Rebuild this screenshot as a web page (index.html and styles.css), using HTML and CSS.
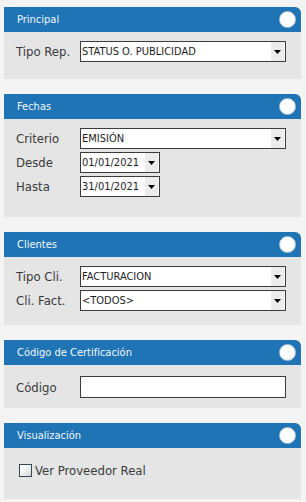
FILE: index.html
```html
<!DOCTYPE html>
<html lang="es">
<head>
    <meta charset="UTF-8">
    <meta name="viewport" content="width=device-width, initial-scale=1.0">
    <title>Filtros del Reporte</title>
    <link rel="stylesheet" href="styles.css">
</head>
<body>

<!-- Principal -->
<div class="panel panel-principal">
    <div class="panel-header">
        <span class="panel-title">Principal</span>
        <span class="panel-toggle"></span>
    </div>
    <div class="panel-body">
        <div class="row">
            <label class="label">Tipo Rep.</label>
            <div class="select">
                <span class="select-value">STATUS O. PUBLICIDAD</span>
                <span class="select-arrow"><svg width="7" height="4" viewBox="0 0 7 4"><polygon points="0,0 7,0 3.5,4" fill="#000"/></svg></span>
            </div>
        </div>
    </div>
</div>

<!-- Fechas -->
<div class="panel panel-fechas">
    <div class="panel-header">
        <span class="panel-title">Fechas</span>
        <span class="panel-toggle"></span>
    </div>
    <div class="panel-body">
        <div class="row">
            <label class="label">Criterio</label>
            <div class="select">
                <span class="select-value">EMISIÓN</span>
                <span class="select-arrow"><svg width="7" height="4" viewBox="0 0 7 4"><polygon points="0,0 7,0 3.5,4" fill="#000"/></svg></span>
            </div>
        </div>
        <div class="row">
            <label class="label">Desde</label>
            <div class="select select-date">
                <span class="select-value">01/01/2021</span>
                <span class="select-arrow"><svg width="7" height="4" viewBox="0 0 7 4"><polygon points="0,0 7,0 3.5,4" fill="#000"/></svg></span>
            </div>
        </div>
        <div class="row">
            <label class="label">Hasta</label>
            <div class="select select-date">
                <span class="select-value">31/01/2021</span>
                <span class="select-arrow"><svg width="7" height="4" viewBox="0 0 7 4"><polygon points="0,0 7,0 3.5,4" fill="#000"/></svg></span>
            </div>
        </div>
    </div>
</div>

<!-- Clientes -->
<div class="panel panel-clientes">
    <div class="panel-header">
        <span class="panel-title">Clientes</span>
        <span class="panel-toggle"></span>
    </div>
    <div class="panel-body">
        <div class="row">
            <label class="label">Tipo Cli.</label>
            <div class="select">
                <span class="select-value">FACTURACION</span>
                <span class="select-arrow"><svg width="7" height="4" viewBox="0 0 7 4"><polygon points="0,0 7,0 3.5,4" fill="#000"/></svg></span>
            </div>
        </div>
        <div class="row">
            <label class="label">Cli. Fact.</label>
            <div class="select">
                <span class="select-value">&lt;TODOS&gt;</span>
                <span class="select-arrow"><svg width="7" height="4" viewBox="0 0 7 4"><polygon points="0,0 7,0 3.5,4" fill="#000"/></svg></span>
            </div>
        </div>
    </div>
</div>

<!-- Codigo de Certificacion -->
<div class="panel panel-codigo">
    <div class="panel-header">
        <span class="panel-title">Código de Certificación</span>
        <span class="panel-toggle"></span>
    </div>
    <div class="panel-body">
        <div class="row">
            <label class="label">Código</label>
            <input type="text" class="text-input">
        </div>
    </div>
</div>

<!-- Visualizacion -->
<div class="panel panel-visual">
    <div class="panel-header">
        <span class="panel-title">Visualización</span>
        <span class="panel-toggle"></span>
    </div>
    <div class="panel-body">
        <label class="check">
            <span class="check-box"></span>
            <span class="check-text">Ver Proveedor Real</span>
        </label>
    </div>
</div>

</body>
</html>
```

FILE: styles.css
```css
body {
    margin: 7px 5px 0 4px;
    background-color: #f4f4f4;
    font-family: "DejaVu Sans Condensed", "DejaVu Sans", sans-serif;
    font-stretch: condensed;
}
.panel {
    margin-bottom: 15px;
}
.panel-header {
    height: 25px;
    background-color: #1f74b5;
    border-top-right-radius: 6px;
    display: flex;
    align-items: center;
    justify-content: space-between;
    padding: 0 5px 0 13px;
}
.panel-title {
    color: #f4f8fc;
    font-size: 11px;
}
.panel-toggle {
    width: 15px;
    height: 15px;
    border-radius: 50%;
    background: radial-gradient(circle at 45% 40%, #ffffff 60%, #e4eaf1 85%, #c3cfdc 100%);
    border: 1px solid #b9c8d8;
    margin-top: -1px;
}
.panel-body {
    background-color: #e5e5e5;
    padding: 9px 15px 17px 12px;
    display: flex;
    flex-direction: column;
    gap: 3px;
}
.panel-fechas .panel-body {
    padding-bottom: 20px;
}
.panel-clientes .panel-body {
    padding-bottom: 14px;
}
.panel-codigo .panel-body {
    padding-top: 11px;
    padding-bottom: 10px;
}
.panel-visual .panel-body {
    padding-top: 15px;
    padding-bottom: 21px;
}
.panel-visual {
    margin-bottom: 0;
}
.row {
    display: flex;
    align-items: center;
}
.label {
    width: 64px;
    flex-shrink: 0;
    font-size: 13px;
    color: #3a3a3a;
}
.select {
    flex: 1;
    height: 21px;
    box-sizing: border-box;
    border: 1px solid #3c3c3c;
    background-color: #fff;
    display: flex;
    align-items: stretch;
}
.select-date {
    flex: none;
    width: 80px;
}
.select-value {
    flex: 1;
    font-size: 11px;
    color: #1e1e1e;
    padding-left: 1px;
    display: flex;
    align-items: center;
    white-space: nowrap;
    overflow: hidden;
}
.select-arrow {
    width: 13px;
    margin-right: 1px;
    background-color: #ececec;
    display: flex;
    align-items: center;
    justify-content: center;
}
.text-input {
    flex: 1;
    height: 22px;
    box-sizing: border-box;
    border: 1px solid #3c3c3c;
    background-color: #fff;
    margin: 0;
}
.check {
    display: flex;
    align-items: center;
    gap: 3px;
    padding-left: 3px;
}
.check-box {
    width: 11px;
    height: 11px;
    border: 1px solid #34465c;
    background: linear-gradient(135deg, #ffffff 20%, #d8d8d8 100%);
}
.check-text {
    font-size: 13px;
    color: #3a3a3a;
}
```
